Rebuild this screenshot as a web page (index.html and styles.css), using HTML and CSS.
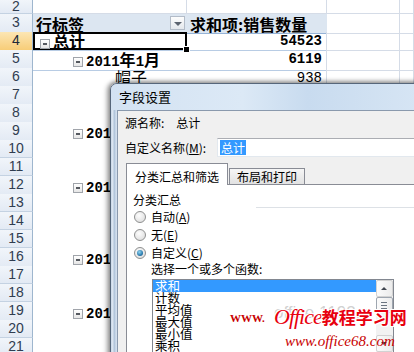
FILE: index.html
```html
<!DOCTYPE html>
<html lang="zh-CN">
<head>
    <meta charset="UTF-8">
    <title>字段设置</title>
    <link rel="stylesheet" href="styles.css">
</head>
<body>
    <div class="sheet">
        <div class="row cut">
            <div class="rh">2</div>
            <div class="c g"></div><div class="c g"></div><div class="c g"></div><div class="c g"></div>
        </div>
        <div class="row">
            <div class="rh">3</div>
            <div class="c head">行标签<span class="drop"></span></div>
            <div class="c head">求和项:销售数量</div>
            <div class="c g"></div><div class="c g"></div>
        </div>
        <div class="row">
            <div class="rh on">4</div>
            <div class="c pv sel lvl1"><span class="tog"></span>总计</div>
            <div class="c pv val">54523</div>
            <div class="c g"></div><div class="c g"></div>
        </div>
        <div class="row">
            <div class="rh">5</div>
            <div class="c pv lvl2"><span class="tog"></span><span class="num">2011</span>年<span class="num">1</span>月</div>
            <div class="c pv val">6119</div>
            <div class="c g"></div><div class="c g"></div>
        </div>
        <div class="row">
            <div class="rh">6</div>
            <div class="c lvl3">帽子</div>
            <div class="c pb val thin">938</div>
            <div class="c g"></div><div class="c g"></div>
        </div>
        <div class="row">
            <div class="rh">7</div>
            <div class="c lvl3">手套</div>
            <div class="c pb val thin">2415</div>
            <div class="c g"></div><div class="c g"></div>
        </div>
        <div class="row">
            <div class="rh">8</div>
            <div class="c lvl3">围巾</div>
            <div class="c pb val thin">2766</div>
            <div class="c g"></div><div class="c g"></div>
        </div>
        <div class="row">
            <div class="rh">9</div>
            <div class="c lvl2"><span class="tog"></span><span class="num">2011</span>年<span class="num">2</span>月</div>
            <div class="c pb"></div>
            <div class="c g"></div><div class="c g"></div>
        </div>
        <div class="row"><div class="rh">10</div><div class="c"></div><div class="c pb"></div><div class="c g"></div><div class="c g"></div></div>
        <div class="row"><div class="rh">11</div><div class="c"></div><div class="c pb"></div><div class="c g"></div><div class="c g"></div></div>
        <div class="row">
            <div class="rh">12</div>
            <div class="c lvl2"><span class="tog"></span><span class="num">2011</span>年<span class="num">3</span>月</div>
            <div class="c pb"></div>
            <div class="c g"></div><div class="c g"></div>
        </div>
        <div class="row"><div class="rh">13</div><div class="c"></div><div class="c pb"></div><div class="c g"></div><div class="c g"></div></div>
        <div class="row"><div class="rh">14</div><div class="c"></div><div class="c pb"></div><div class="c g"></div><div class="c g"></div></div>
        <div class="row"><div class="rh">15</div><div class="c"></div><div class="c pb"></div><div class="c g"></div><div class="c g"></div></div>
        <div class="row">
            <div class="rh">16</div>
            <div class="c lvl2"><span class="tog"></span><span class="num">2011</span>年<span class="num">4</span>月</div>
            <div class="c pb"></div>
            <div class="c g"></div><div class="c g"></div>
        </div>
        <div class="row"><div class="rh">17</div><div class="c"></div><div class="c pb"></div><div class="c g"></div><div class="c g"></div></div>
        <div class="row"><div class="rh">18</div><div class="c"></div><div class="c pb"></div><div class="c g"></div><div class="c g"></div></div>
        <div class="row">
            <div class="rh">19</div>
            <div class="c lvl2"><span class="tog"></span><span class="num">2011</span>年<span class="num">5</span>月</div>
            <div class="c pb"></div>
            <div class="c g"></div><div class="c g"></div>
        </div>
        <div class="row"><div class="rh">20</div><div class="c"></div><div class="c pb"></div><div class="c g"></div><div class="c g"></div></div>
        <div class="row"><div class="rh">21</div><div class="c"></div><div class="c pb"></div><div class="c g"></div><div class="c g"></div></div>
    </div>

    <div class="dialog">
        <div class="title">字段设置</div>
        <div class="client">
            <div class="line">源名称:<span class="src">总计</span></div>
            <div class="line name">
                <span class="lbl">自定义名称(<u>M</u>):</span>
                <span class="input"><span class="hl">总计</span></span>
            </div>
            <div class="tabs">
                <span class="tab active">分类汇总和筛选</span>
                <span class="tab">布局和打印</span>
            </div>
            <div class="panel">
                <div class="group">分类汇总</div>
                <div class="radio"><span class="dot"></span>自动(<u>A</u>)</div>
                <div class="radio"><span class="dot"></span>无(<u>E</u>)</div>
                <div class="radio"><span class="dot checked"></span>自定义(<u>C</u>)</div>
                <div class="hint">选择一个或多个函数:</div>
                <div class="list">
                    <ul class="items">
                        <li class="picked">求和</li>
                        <li>计数</li>
                        <li>平均值</li>
                        <li>最大值</li>
                        <li>最小值</li>
                        <li>乘积</li>
                    </ul>
                    <div class="scroll">
                        <span class="btn up"></span>
                        <span class="thumb"></span>
                        <span class="track"></span>
                        <span class="btn down"></span>
                    </div>
                </div>
            </div>
        </div>
    </div>

    <div class="mark">
        <span class="www">WWW.</span>
        <span class="ghost">office.1192.c</span>
        <span class="logo"><i>Office</i>教程学习网</span>
        <span class="url">www.office68.com</span>
    </div>
</body>
</html>
```

FILE: styles.css
```css
body {
    margin: 0;
    width: 414px;
    height: 352px;
    overflow: hidden;
    position: relative;
    background: #fff;
    font-family: "Noto Sans CJK SC", sans-serif;
}

/* spreadsheet */
.row {
    display: grid;
    grid-template-columns: 33px 154px 140px 73px 1fr;
    height: 18px;
}
.row.cut {
    height: 14px;
}
.rh {
    box-sizing: border-box;
    background: linear-gradient(#f1f5fa, #e3eaf4);
    border-right: 1px solid #9eb6ce;
    border-bottom: 1px solid #c4d2e2;
    color: #303d50;
    font: 14px/17px "Liberation Sans", sans-serif;
    text-align: center;
}
.cut .rh {
    line-height: 13px;
}
.rh.on {
    background: linear-gradient(#fce6b4, #f7cd78);
    border-bottom-color: #dcb363;
    color: #20293a;
}
.c {
    box-sizing: border-box;
    position: relative;
    white-space: nowrap;
    font-size: 16px;
    line-height: 18px;
    font-weight: bold;
    color: #000;
}
.g {
    border-right: 1px solid #d5dce7;
    border-bottom: 1px solid #d5dce7;
}
.head {
    background: #dce6f1;
    border-bottom: 1px solid #95b3d7;
    padding: 1px 0 0 3px;
}
.drop {
    position: absolute;
    right: 2px;
    top: 2px;
    width: 15px;
    height: 14px;
    box-sizing: border-box;
    border: 1px solid #b3bcc8;
    background: linear-gradient(#fdfdfd, #e4e8ed);
}
.drop::after {
    content: "";
    position: absolute;
    left: 3px;
    top: 5px;
    border-left: 4px solid transparent;
    border-right: 4px solid transparent;
    border-top: 4px solid #5c6470;
}
.pv {
    border-bottom: 1px solid #b8cce4;
}
.pv.val, .pb {
    border-right: 1px solid #d5dce7;
}
.val {
    text-align: right;
    padding-right: 4px;
    font: bold 14px/18px "Liberation Mono", monospace;
}
.val.thin {
    font-weight: normal;
    line-height: 20px;
}
.num {
    font: bold 14px "Liberation Mono", monospace;
}
.lvl1 { padding-left: 7px; }
.lvl2 { padding-left: 40px; }
.lvl3 { padding-left: 82px; font-weight: normal; }
.tog {
    display: inline-block;
    position: relative;
    width: 10px;
    height: 10px;
    box-sizing: border-box;
    border: 1px solid #a0a4aa;
    background: linear-gradient(#fff, #e6e6e6);
    margin-right: 3px;
    vertical-align: -1px;
}
.tog::after {
    content: "";
    position: absolute;
    left: 2px;
    top: 3px;
    width: 4px;
    height: 2px;
    background: #55595f;
}
.sel {
    box-shadow: inset 0 0 0 2px #000;
    z-index: 1;
}
.sel::after {
    content: "";
    position: absolute;
    right: -3px;
    bottom: -3px;
    width: 5px;
    height: 5px;
    background: #000;
    border: 1px solid #fff;
}

/* dialog window */
.dialog {
    position: absolute;
    left: 110px;
    top: 83px;
    width: 330px;
    height: 300px;
    box-sizing: border-box;
    border: 1px solid #56667a;
    border-radius: 7px 7px 0 0;
    background: linear-gradient(90deg, #c9d7e8 0, #e1eaf4 2px, #aabfd6 3px, #cfdcec 5px, #d6e3f1 6px);
    padding-left: 6px;
    box-shadow: -3px 0 5px rgba(0, 0, 0, 0.35), 0 -2px 4px rgba(0, 0, 0, 0.3);
    z-index: 2;
    font-size: 12px;
    color: #000;
}
.title {
    height: 26px;
    line-height: 26px;
    margin-left: -6px;
    padding-left: 8px;
    border-radius: 6px 6px 0 0;
    background: linear-gradient(90deg, #d3e2f2, #dce9f6 40%, #c8dbef 60%, #d9e7f5);
    font-size: 13px;
}
.client {
    height: 100%;
    box-sizing: border-box;
    background: #f0f0f0;
    border-top: 1px solid #8a99ad;
    border-left: 1px solid #8a99ad;
    padding: 4px 0 0 7px;
}
.line {
    height: 16px;
    line-height: 16px;
    white-space: nowrap;
}
.src {
    margin-left: 12px;
}
.line.name {
    display: flex;
    height: 19px;
    line-height: 19px;
    margin-top: 7px;
}
.lbl {
    width: 92px;
}
.input {
    flex: 1;
    box-sizing: border-box;
    background: #fff;
    border: 1px solid #e2e8ee;
    border-top-color: #abadb3;
    padding: 1px 0 0 2px;
    line-height: 15px;
}
.hl {
    display: inline-block;
    background: #3399ff;
    color: #fff;
    padding: 0 1px;
}
.tabs {
    display: flex;
    align-items: flex-end;
    height: 21px;
    margin: 6px 0 0 1px;
    position: relative;
    z-index: 1;
}
.tab {
    box-sizing: border-box;
    height: 16px;
    line-height: 15px;
    padding: 0 7px;
    border: 1px solid #898c95;
    border-bottom: none;
    background: linear-gradient(#f6f6f6, #e2e2e2);
    margin-left: 1px;
}
.tab.active {
    height: 22px;
    line-height: 26px;
    margin-left: 0;
    margin-bottom: -1px;
    background: #fff;
    width: 102px;
    padding: 0;
    text-align: center;
}
.panel {
    height: 200px;
    background: #fff;
    border: 1px solid #898c95;
    margin-left: 1px;
    padding: 7px 0 0 6px;
}
.group {
    display: flex;
    height: 16px;
    line-height: 16px;
}
.group::after {
    content: "";
    flex: 1;
    margin-left: 75px;
    border-bottom: 1px solid #dde1e6;
}
.radio {
    display: flex;
    align-items: center;
    height: 18px;
    line-height: 18px;
}
.radio:first-of-type {
    margin-top: 4px;
}
.dot {
    position: relative;
    width: 12px;
    height: 12px;
    box-sizing: border-box;
    border: 1px solid #8e8f8f;
    border-radius: 50%;
    background: radial-gradient(circle at 40% 35%, #fdfdfd, #d8d8d8);
    margin: 0 5px 0 1px;
}
.dot.checked::after {
    content: "";
    position: absolute;
    left: 2px;
    top: 2px;
    width: 6px;
    height: 6px;
    border-radius: 50%;
    background: radial-gradient(circle at 40% 35%, #8fd5f2, #1f6ea3 70%, #14466b);
}
.hint {
    height: 14px;
    line-height: 14px;
    margin-left: 18px;
}
.list {
    display: flex;
    width: 242px;
    height: 74px;
    box-sizing: border-box;
    margin: 3px 0 0 19px;
    border: 1px solid #828790;
    background: #fff;
}
.items {
    flex: 1;
    list-style: none;
    margin: 0;
    padding: 0;
}
.items li {
    height: 12px;
    line-height: 12px;
    padding-left: 2px;
    font-size: 12.5px;
}
.items li.picked {
    background: #3399ff;
    color: #fff;
}
.scroll {
    display: flex;
    flex-direction: column;
    width: 17px;
    background: #f2f2f2;
}
.btn, .thumb {
    position: relative;
    height: 17px;
    box-sizing: border-box;
    border: 1px solid #d2d2d2;
    border-radius: 2px;
    background: linear-gradient(90deg, #fbfbfb, #ececec);
}
.btn::after {
    content: "";
    position: absolute;
    left: 4px;
    top: 6px;
    border-left: 3px solid transparent;
    border-right: 3px solid transparent;
    border-bottom: 3px solid #40464f;
}
.btn.down::after {
    border-bottom: none;
    border-top: 3px solid #40464f;
}
.thumb {
    height: 16px;
    border-color: #9ea6b0;
}
.thumb::after {
    content: "";
    position: absolute;
    left: 4px;
    top: 4px;
    width: 6px;
    height: 5px;
    border-top: 1px solid #6b7480;
    border-bottom: 1px solid #6b7480;
    background: linear-gradient(transparent 2px, #6b7480 2px, #6b7480 3px, transparent 3px);
}
.track {
    flex: 1;
}

/* watermark */
.mark {
    position: absolute;
    left: 228px;
    top: 300px;
    width: 186px;
    height: 52px;
    z-index: 3;
    color: #d40000;
}
.mark span {
    position: absolute;
    white-space: nowrap;
}
.www {
    left: 2px;
    top: 12px;
    font: bold 11px "Liberation Serif", serif;
    color: #c80000;
}
.ghost {
    left: 46px;
    top: 3px;
    font: 17px "Liberation Sans", sans-serif;
    color: rgba(150, 150, 150, 0.45);
}
.logo {
    left: 46px;
    top: 4px;
    font: bold 17px "Noto Sans CJK SC", sans-serif;
    color: #e8000e;
    text-shadow: 1px 1px 0 #fff, -1px -1px 0 #fff, 1px -1px 0 #fff, -1px 1px 0 #fff;
}
.logo i {
    font: italic 22px "Liberation Serif", serif;
    letter-spacing: -1px;
}
.url {
    left: 57px;
    top: 33px;
    font: italic 15px "Liberation Serif", serif;
    color: #c80000;
}
```
